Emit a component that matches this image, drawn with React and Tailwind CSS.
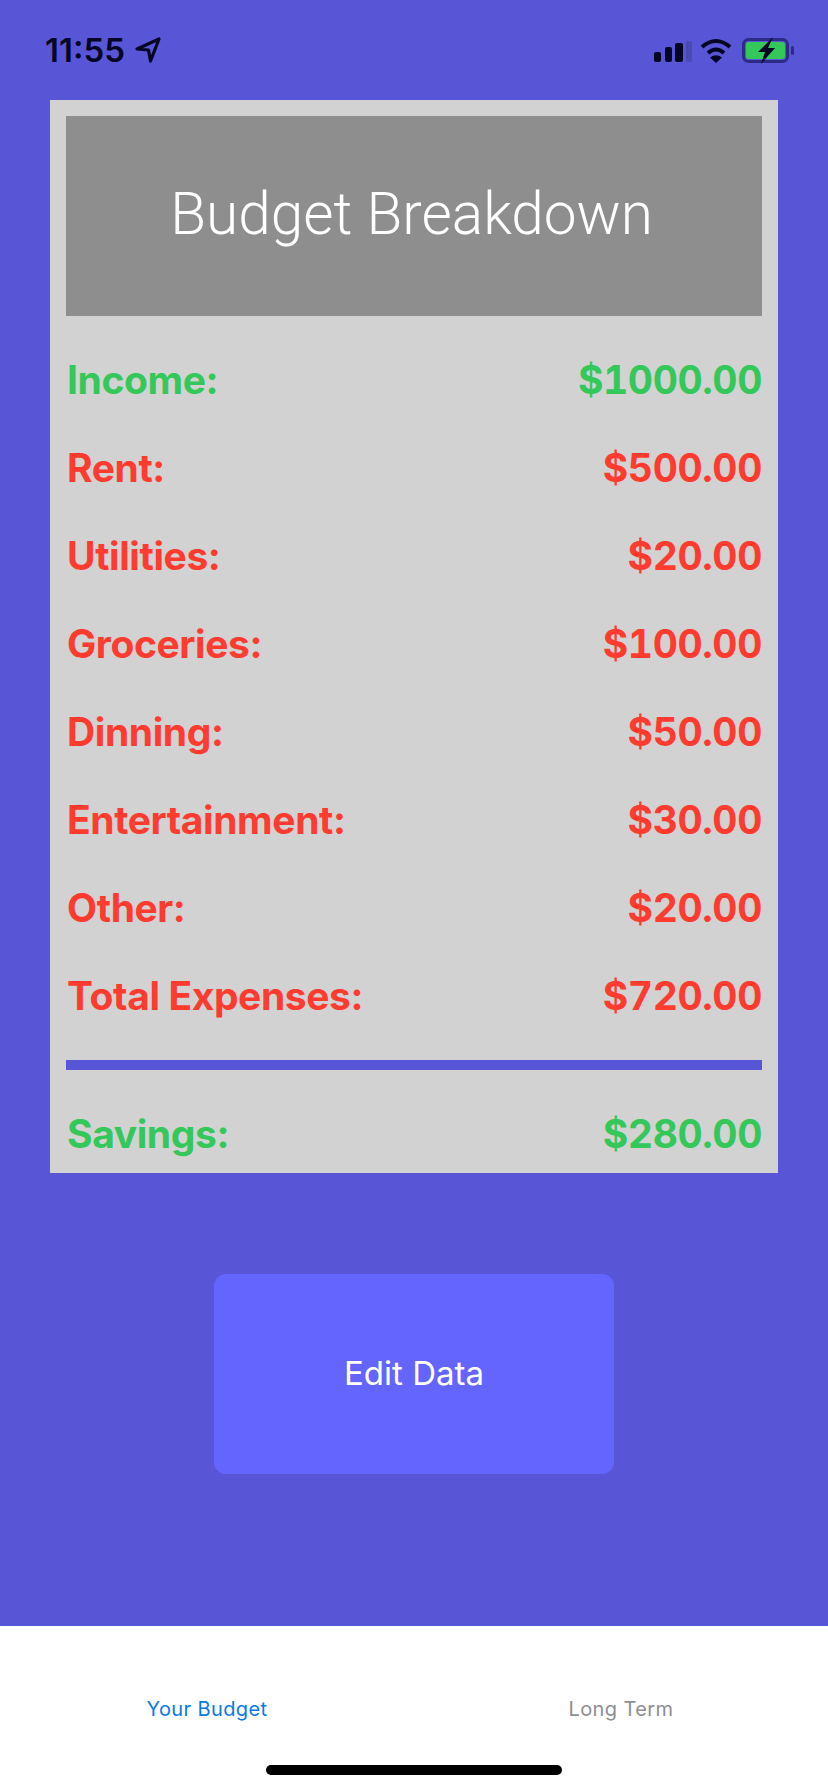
import React from 'react';

const rows = [
  { label: 'Income:', value: '$1000.00', good: true },
  { label: 'Rent:', value: '$500.00' },
  { label: 'Utilities:', value: '$20.00' },
  { label: 'Groceries:', value: '$100.00' },
  { label: 'Dinning:', value: '$50.00' },
  { label: 'Entertainment:', value: '$30.00' },
  { label: 'Other:', value: '$20.00' },
  { label: 'Total Expenses:', value: '$720.00' },
];

const Row = ({ label, value, good }) => (
  <div className={`flex h-[88px] items-center justify-between text-[39px] font-bold tracking-[-0.4px] ${good ? 'text-[#34c759]' : 'text-[#ff3b30]'}`}>
    <span className="pl-[1px]">{label}</span>
    <span className="tabular-nums">{value}</span>
  </div>
);

const StatusBar = () => (
  <div className="flex h-[100px] items-start justify-between pl-[45px] pr-[34px] pt-[30px]">
    <div className="flex items-center gap-[10px] text-[#050524]">
      <span className="text-[33px] font-semibold leading-[40px]">11:55</span>
      <svg width="26" height="26" viewBox="0 0 26 26" fill="none" stroke="currentColor" strokeWidth="3.2" strokeLinejoin="round">
        <path d="M2 12 L24 2 L15.5 24 L13.5 13 Z" />
      </svg>
    </div>
    <div className="flex items-start gap-[10px] pt-[7px]">
      <svg className="-mr-[2px]" width="38" height="27" viewBox="0 0 38 27">
        <rect x="0" y="15" width="7" height="10" rx="2" fill="#050524" />
        <rect x="11" y="10" width="7" height="15" rx="2" fill="#050524" />
        <rect x="21" y="6" width="8" height="19" rx="2" fill="#050524" />
        <rect x="32" y="4" width="6" height="21" rx="2" fill="#4b49b5" />
      </svg>
      <svg width="32" height="27" viewBox="0 0 32 27" fill="none" stroke="#050524" strokeWidth="4">
        <path d="M2 10 Q16 -2 30 10" />
        <path d="M8 16 Q16 9 24 16" />
        <path d="M16 26 L10 20.5 Q16 16 22 20.5 Z" fill="#050524" stroke="none" />
      </svg>
      <svg width="52" height="27" viewBox="0 0 52 27">
        <rect x="1.5" y="2.5" width="44" height="22" rx="5" fill="none" stroke="#2d2c85" strokeWidth="3" />
        <rect x="4" y="5" width="39" height="17" rx="3" fill="#34c759" />
        <rect x="49" y="9" width="3" height="9" rx="1.5" fill="#2d2c85" />
        <path d="M31 0 L16 15 L23 15 L19 27 L33 11 L26 11 Z" fill="#050524" />
      </svg>
    </div>
  </div>
);

const App = () => {
  return (
    <div className="flex h-[1792px] w-[828px] flex-col overflow-hidden bg-[#5856d6] font-['Inter',sans-serif]">
      <StatusBar />

      <div className="mx-[50px] h-[1073px] overflow-hidden bg-[#d2d2d2] p-4">
        <div className="flex h-[200px] items-center justify-center bg-[#8e8e8e] pb-[3px] pr-[5px] font-['Roboto',sans-serif] text-[58.5px] font-light text-white">
          Budget Breakdown
        </div>
        <div className="mt-5">
          {rows.map((r) => (
            <Row key={r.label} {...r} />
          ))}
        </div>
        <div className="mt-5 h-[10px] bg-[#5856d6]" />
        <div className="pt-5">
          <Row label="Savings:" value="$280.00" good />
        </div>
      </div>

      <div className="flex justify-center pt-[101px]">
        <button className="h-[200px] w-[400px] rounded-[12px] bg-[#6464ff] text-[33px] text-white">Edit Data</button>
      </div>

      <div className="mt-auto h-[166px] bg-white">
        <div className="flex h-[166px] flex-col items-center">
          <div className="flex h-[111px] w-full items-end pb-[13px] text-[20px] tracking-[0.4px]">
            <div className="w-1/2 text-center text-[#0a7ae8]">Your Budget</div>
            <div className="w-1/2 text-center text-[#8e8e93]">Long Term</div>
          </div>
          <div className="mt-[28px] h-[10px] w-[296px] rounded-full bg-black" />
        </div>
      </div>
    </div>
  );
};

export default App;
